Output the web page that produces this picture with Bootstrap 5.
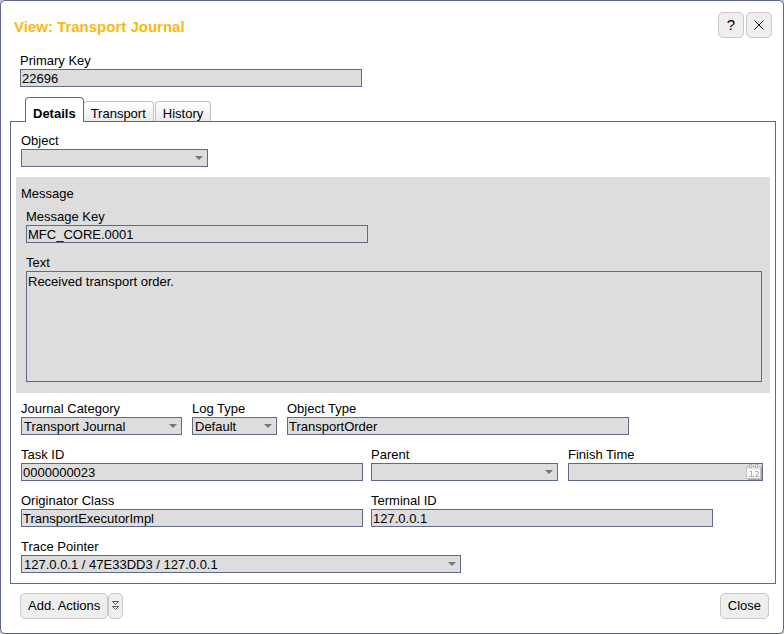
<!DOCTYPE html>
<html lang="en">
<head>
<meta charset="utf-8">
<meta name="viewport" content="width=device-width, initial-scale=1">
<title>View: Transport Journal</title>
<link href="https://cdn.jsdelivr.net/npm/bootstrap@5.3.0/dist/css/bootstrap.min.css" rel="stylesheet">
<style>
  :root { --line: #5f6a89; --fill: #dddddd; }
  html { background: #c8c8cc; }
  body { font: 13px/16px "Liberation Sans", Arial, sans-serif; color: #000; background: transparent; }
  .dialog { background: #fff; border: 1px solid var(--line); border-radius: 5px; min-height: 100vh; padding: 11px 7px 14px 9px; }
  .dialog-title { font-size: 15px; line-height: 20px; font-weight: bold; color: #fbb90f; margin: 5px 0 0 4px; }
  .tool { height: 26px; font-size: 13px; line-height: 16px; padding: 0 7px; background: #eeeeee; border: 1px solid #c8c8c8; border-radius: 5px; color: #000; }
  .tool:hover { background: #e2e2e2; border-color: #b0b0b0; color: #000; }
  .tool-sq { width: 26px; padding: 0; font-size: 15px; }
  .tool-slim { width: 15px; padding: 0; }
  .tool-pair { gap: 2px; }
  .field { max-width: 100%; }
  .field > label, .group-name { display: block; line-height: 16px; margin: 0; }
  .box, .box:focus, .box:disabled {
    height: 18px; min-height: 18px; padding: 0 1px; font-size: 13px; line-height: 16px; color: #000;
    background-color: var(--fill); border: 1px solid var(--line); border-radius: 0; opacity: 1; box-shadow: none;
  }
  select.box, select.box:disabled {
    padding: 1px 16px 0 2px; line-height: 15px;
    background-image: url("data:image/svg+xml,%3Csvg xmlns='http://www.w3.org/2000/svg' viewBox='0 0 8 4'%3E%3Cpath fill='%23777' d='M0 0h8L4 4z'/%3E%3C/svg%3E");
    background-size: 8px 4px; background-position: right 4px center;
  }
  textarea.box, textarea.box:focus { height: 111px; padding-top: 2px; resize: none; }
  .date-box { height: 18px; background: var(--fill); border: 1px solid var(--line); }
  .date-box .box { height: 16px; min-height: 16px; border: 0; min-width: 0; }
  .date-box button { width: 17px; line-height: 0; }
  .w-long { width: 342px; }
  .w-mid { width: 187px; }
  .w-cat { width: 161px; }
  .w-log { width: 85px; }
  .w-date { width: 195px; }
  .w-trace { width: 440px; }
  .fields { display: flex; flex-wrap: wrap; column-gap: 10px; row-gap: 12px; padding: 0 5px; }
  .fields-tight { column-gap: 8px; }
  .form-rows { display: flex; flex-direction: column; gap: 12px; }
  .key-row { padding: 0 10px; margin-top: 15px; }
  .tabs { margin: 10px 0 -1px 15px; border: 0; align-items: flex-end; gap: 1px; }
  .tabs .nav-link { height: 20px; padding: 4px 7px 0; margin: 0; color: #000; line-height: 16px; border: 1px solid #c0c0c0; border-width: 1px 1px 0; border-radius: 4px 4px 0 0; background: linear-gradient(#fff, #ebebeb); }
  .tabs .nav-item { padding-bottom: 1px; }
  .tabs .nav-item:first-child { padding-bottom: 0; margin-right: -2px; }
  .tabs .nav-link.active { height: 25px; padding-top: 8px; font-weight: bold; color: #000; background: #fff; border-color: var(--line); position: relative; }
  .panel { border: 1px solid var(--line); padding: 11px 5px 10px; }
  .message { background: var(--fill); margin: 10px 0 8px; padding: 9px 8px 11px 10px; }
  .group-name { margin: 0 0 7px -5px; }
  .actions { padding: 9px 7px 0 10px; }
</style>
</head>
<body>
<main class="dialog d-flex flex-column">
  <header class="d-flex justify-content-between align-items-start pe-1">
    <h1 class="dialog-title">View: Transport Journal</h1>
    <div class="d-flex tool-pair">
      <button type="button" class="btn tool tool-sq" aria-label="Help">?</button>
      <button type="button" class="btn tool tool-sq d-flex align-items-center justify-content-center" aria-label="Close window">
        <svg width="10" height="10" viewBox="0 0 10 10" stroke="#111" fill="none"><path d="M.5.5l9 9M9.5.5l-9 9"/></svg>
      </button>
    </div>
  </header>

  <div class="key-row">
    <div class="field w-long">
      <label for="primaryKey">Primary Key</label>
      <input id="primaryKey" class="form-control box" value="22696" readonly>
    </div>
  </div>

  <ul class="nav nav-tabs tabs" role="tablist">
    <li class="nav-item" role="presentation"><button type="button" class="nav-link active" role="tab" data-bs-toggle="tab" data-bs-target="#details" aria-selected="true">Details</button></li>
    <li class="nav-item" role="presentation"><button type="button" class="nav-link" role="tab" data-bs-toggle="tab" data-bs-target="#transport" aria-selected="false">Transport</button></li>
    <li class="nav-item" role="presentation"><button type="button" class="nav-link" role="tab" data-bs-toggle="tab" data-bs-target="#history" aria-selected="false">History</button></li>
  </ul>

  <div class="tab-content panel">
    <section class="tab-pane active" id="details" role="tabpanel">
      <div class="fields">
        <div class="field w-mid"><label for="object">Object</label><select id="object" class="form-select box" disabled><option></option></select></div>
      </div>

      <div class="message">
        <div class="group-name">Message</div>
        <div class="form-rows">
          <div class="field w-long"><label for="messageKey">Message Key</label><input id="messageKey" class="form-control box" value="MFC_CORE.0001" readonly></div>
          <div class="field"><label for="text">Text</label><textarea id="text" class="form-control box" readonly>Received transport order.</textarea></div>
        </div>
      </div>

      <div class="form-rows">
        <div class="fields">
          <div class="field w-cat"><label for="category">Journal Category</label><select id="category" class="form-select box" disabled><option>Transport Journal</option></select></div>
          <div class="field w-log"><label for="logType">Log Type</label><select id="logType" class="form-select box" disabled><option>Default</option></select></div>
          <div class="field w-long"><label for="objectType">Object Type</label><input id="objectType" class="form-control box" value="TransportOrder" readonly></div>
        </div>
        <div class="fields fields-tight">
          <div class="field w-long"><label for="taskId">Task ID</label><input id="taskId" class="form-control box" value="0000000023" readonly></div>
          <div class="fields p-0">
            <div class="field w-mid"><label for="parent">Parent</label><select id="parent" class="form-select box" disabled><option></option></select></div>
            <div class="field w-date">
              <label for="finish">Finish Time</label>
              <div class="date-box d-flex">
                <input id="finish" class="form-control box" readonly>
                <button type="button" class="border-0 p-0 bg-transparent" aria-label="Pick a date" disabled>
                  <svg width="16" height="16" viewBox="0 0 16 16" shape-rendering="crispEdges" fill="none">
                    <path fill="#a4a4a4" d="M2 3h14v13H2z"/>
                    <path fill="#f6f6f6" stroke="#c4c4c4" d="M.5 2.500h14v12H.5z"/>
                    <path fill="#e4e4e4" d="M1 3h13v2H1z"/>
                    <path fill="#fff" stroke="#b4b4b4" d="M3.500.500h2v3h-2zM9.500.500h2v3h-2z"/>
                    <path stroke="#b4b4b4" d="M6 2.500h3"/>
                    <path stroke="#b0b0b0" d="M4 7.500h2M5.500 7v6M3 12.500h5M9 7.500h3M12.500 8v2M11 10.500h1M10 11.500h1M9 12.500h4"/>
                  </svg>
                </button>
              </div>
            </div>
          </div>
        </div>
        <div class="fields fields-tight">
          <div class="field w-long"><label for="originator">Originator Class</label><input id="originator" class="form-control box" value="TransportExecutorImpl" readonly></div>
          <div class="field w-long"><label for="terminal">Terminal ID</label><input id="terminal" class="form-control box" value="127.0.0.1" readonly></div>
        </div>
        <div class="fields">
          <div class="field w-trace"><label for="trace">Trace Pointer</label><select id="trace" class="form-select box" disabled><option>127.0.0.1 / 47E33DD3 / 127.0.0.1</option></select></div>
        </div>
      </div>
    </section>
    <section class="tab-pane" id="transport" role="tabpanel"></section>
    <section class="tab-pane" id="history" role="tabpanel"></section>
  </div>

  <footer class="actions d-flex justify-content-between">
    <div class="d-flex">
      <button type="button" class="btn tool">Add. Actions</button>
      <button type="button" class="btn tool tool-slim d-flex align-items-center justify-content-center" aria-label="More actions">
        <svg width="7" height="10" viewBox="0 0 7 10" fill="#fff" stroke="#555"><path d="M.5.500h6L3.500 3.500zM.5 5.500h6L3.500 8.500z"/></svg>
      </button>
    </div>
    <button type="button" class="btn tool">Close</button>
  </footer>
</main>
<script src="https://cdn.jsdelivr.net/npm/bootstrap@5.3.0/dist/js/bootstrap.bundle.min.js"></script>
</body>
</html>
